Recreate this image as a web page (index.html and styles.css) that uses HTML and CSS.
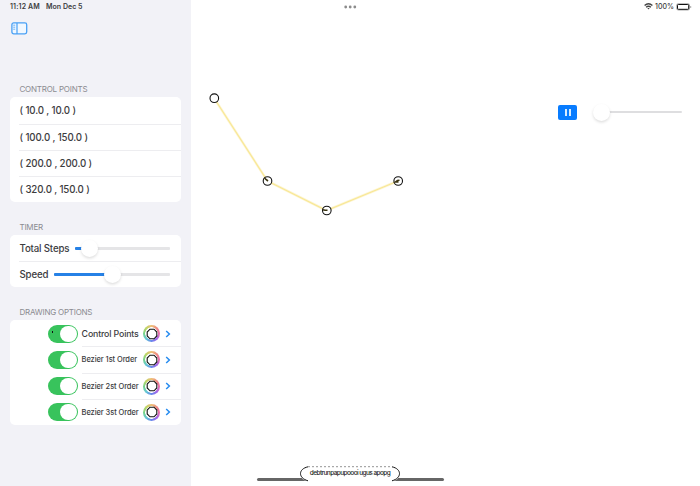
FILE: index.html
```html
<!DOCTYPE html>
<html lang="en">
<head>
<meta charset="utf-8">
<title>Bezier</title>
<link rel="stylesheet" href="styles.css">
</head>
<body>
<aside class="sidebar">
  <div class="clock"><span class="time">11:12 AM</span><span class="date">Mon Dec 5</span></div>
  <svg class="toggle-icon" width="17" height="13" viewBox="0 0 17 13"><rect x=".9" y=".9" width="14.8" height="11" rx="1.8" fill="#f1f8ff" stroke="#49a0f5" stroke-width="1.3"/><path d="M6 1v11" stroke="#49a0f5" stroke-width="1.2"/><path d="M2.2 3.2h2M2.2 5.2h2M2.2 7.2h2" stroke="#6db3f7" stroke-width="1"/></svg>
  <section class="group points">
    <h2>CONTROL POINTS</h2>
    <ul class="card">
      <li>( 10.0 , 10.0 )</li>
      <li>( 100.0 , 150.0 )</li>
      <li>( 200.0 , 200.0 )</li>
      <li>( 320.0 , 150.0 )</li>
    </ul>
  </section>
  <section class="group timer">
    <h2>TIMER</h2>
    <ul class="card">
      <li><span class="label steps">Total Steps</span><div class="slider" style="--v:15%"><i></i><b></b></div></li>
      <li><span class="label speed">Speed</span><div class="slider" style="--v:50%"><i></i><b></b></div></li>
    </ul>
  </section>
  <section class="group options">
    <h2>DRAWING OPTIONS</h2>
    <ul class="card">
      <li><span class="switch dot"></span><span class="name large">Control Points</span><span class="wheel"><svg width="12" height="12" viewBox="0 0 12 12"><path d="M4 1.2h4L10.8 4v4L8 10.8H4L1.2 8V4z"/></svg></span><svg class="chev" width="6" height="8" viewBox="0 0 6 8"><path d="M1.2 1l3.2 3-3.2 3"/></svg></li>
      <li><span class="switch"></span><span class="name">Bezier 1st Order</span><span class="wheel"><svg width="12" height="12" viewBox="0 0 12 12"><path d="M4 1.2h4L10.8 4v4L8 10.8H4L1.2 8V4z"/></svg></span><svg class="chev" width="6" height="8" viewBox="0 0 6 8"><path d="M1.2 1l3.2 3-3.2 3"/></svg></li>
      <li><span class="switch"></span><span class="name">Bezier 2st Order</span><span class="wheel"><svg width="12" height="12" viewBox="0 0 12 12"><path d="M4 1.2h4L10.8 4v4L8 10.8H4L1.2 8V4z"/></svg></span><svg class="chev" width="6" height="8" viewBox="0 0 6 8"><path d="M1.2 1l3.2 3-3.2 3"/></svg></li>
      <li><span class="switch"></span><span class="name">Bezier 3st Order</span><span class="wheel"><svg width="12" height="12" viewBox="0 0 12 12"><path d="M4 1.2h4L10.8 4v4L8 10.8H4L1.2 8V4z"/></svg></span><svg class="chev" width="6" height="8" viewBox="0 0 6 8"><path d="M1.2 1l3.2 3-3.2 3"/></svg></li>
    </ul>
  </section>
</aside>
<main class="stage">
  <header class="status">
    <svg class="dots" width="13" height="4" viewBox="0 0 13 4"><circle cx="1.7" cy="2" r="1.4"/><circle cx="6.2" cy="2" r="1.4"/><circle cx="10.8" cy="2" r="1.4"/></svg>
    <div class="power">
      <svg width="9" height="7" viewBox="0 0 9 7" fill="none" stroke="#444" stroke-width="1.4"><path d="M.6 2.5Q4.5-.9 8.4 2.5M2.1 4.2Q4.5 2.2 6.9 4.2"/><path d="M3.3 5.1h2.4L4.5 6.4z" fill="#444" stroke="none"/></svg>
      <span>100%</span>
      <svg width="16" height="8" viewBox="0 0 16 8"><rect x=".3" y=".3" width="13.6" height="7.2" rx="2" fill="#aaa"/><rect x="1.5" y="1.5" width="11.2" height="4.8" rx="1" fill="#fff" stroke="#111"/><path d="M14.7 3v2" stroke="#aaa"/></svg>
    </div>
  </header>
  <svg class="canvas" width="509" height="486" viewBox="191 0 509 486">
    <path d="M214 98L267.5 181L326.5 210.5L398 181" fill="none" stroke="#fdf6d8" stroke-width="2.6"/>
    <path d="M214 98L267.5 181L326.5 210.5L398 181" fill="none" stroke="#f8e795" stroke-width="1.2"/>
    <g fill="#fff" stroke="#111" stroke-width="1.1"><circle cx="214.3" cy="98.2" r="4.3"/><circle cx="267.5" cy="181" r="4.3"/><circle cx="326.8" cy="210.5" r="4.3"/><circle cx="398.2" cy="181" r="4.3"/></g>
    <path d="M264.5 178l1.5 1.5 2 1.5M323 209.8l2 .5h2.5M399.5 180.2l-2 .3-2 1.5h3" fill="none" stroke="#3b3410" stroke-width="1.6"/>
  </svg>
  <div class="player">
    <button class="pause" aria-label="Pause"><i></i><i></i></button>
    <div class="slider pale" style="--v:9%"><i></i><b></b></div>
  </div>
  <div class="home"></div>
  <div class="pill">
    <svg class="outline" width="100" height="16" viewBox="0 0 100 16"><rect x=".5" y=".5" width="99" height="14.6" rx="7.3" fill="#fff"/><path d="M8 14.8C-2 12-2 3 8 .8M92 .8c10 2.2 10 11.2 0 14" fill="none" stroke="#111"/><path d="M8 .7h84" stroke="#777" stroke-width=".8" stroke-dasharray="2 2"/></svg>
    <span>debtrunpapupoooi ugus apopg</span>
  </div>
</main>
</body>
</html>
```
FILE: styles.css
```css
* { box-sizing: border-box; }
body {
  margin: 0;
  width: 700px;
  height: 486px;
  display: flex;
  overflow: hidden;
  background: #fff;
  color: #3c3c3e;
  font-family: Inter, "Liberation Sans", sans-serif;
}
.sidebar {
  width: 191px;
  padding: 0 10px;
  background: #f2f2f7;
}
.clock {
  display: flex;
  gap: 6px;
  height: 14px;
  line-height: 14px;
  font-size: 7px;
  font-weight: 600;
  white-space: nowrap;
}
.time { width: 30px; letter-spacing: .13px; }
.date { letter-spacing: .04px; }
.toggle-icon { display: block; margin: 8px 0 0 1px; }
.group h2 {
  margin: 0;
  padding-left: 9.5px;
  height: 15px;
  line-height: 14px;
  font-size: 8px;
  font-weight: 400;
  letter-spacing: -.22px;
  color: #8b8b90;
  white-space: nowrap;
}
.points { margin-top: 47.4px; }
.timer { margin-top: 18px; }
.options { margin-top: 18px; }
.card {
  margin: 0;
  padding: 0;
  list-style: none;
  background: #fff;
  border-radius: 5px;
}
.card li {
  position: relative;
  display: flex;
  align-items: center;
  height: 26.15px;
  padding: 1px 11px 0 9.5px;
  font-size: 9.7px;
  font-weight: 500;
  letter-spacing: -.12px;
  white-space: nowrap;
}
.timer .card li { letter-spacing: -.17px; }
.card li + li::before {
  content: "";
  position: absolute;
  top: 0;
  left: 9px;
  right: 0;
  height: 1px;
  background: #ededf0;
}
.steps { width: 55.5px; }
.speed { width: 34.5px; }
.slider {
  position: relative;
  flex: 1;
  height: 2.5px;
  border-radius: 1px;
  background: #e5e5e7;
}
.slider i {
  display: block;
  width: var(--v);
  height: 100%;
  border-radius: 1px;
  background: #2681e6;
}
.slider b {
  position: absolute;
  left: var(--v);
  top: -7.5px;
  width: 17px;
  height: 17px;
  margin-left: -8.5px;
  border-radius: 50%;
  background: #fff;
  box-shadow: 0 1.5px 3px #0002;
}
.options .card li { padding: 1px 10px 0 37.6px; }
.options .card li + li::before { left: 72px; }
.switch {
  position: relative;
  width: 30.5px;
  height: 18.5px;
  border-radius: 10px;
  background: #38c35c;
}
.switch::after {
  content: "";
  position: absolute;
  right: 1px;
  top: 1px;
  width: 16.5px;
  height: 16.5px;
  border-radius: 50%;
  background: #fff;
}
.dot::before {
  content: "";
  position: absolute;
  left: 4px;
  top: 6px;
  width: 1px;
  height: 2px;
  background: #111;
}
.name {
  width: 62px;
  margin-left: 3.7px;
  font-size: 7.5px;
  letter-spacing: -.08px;
}
.options .large { font-size: 8.8px; letter-spacing: -.15px; }
.wheel {
  display: flex;
  align-items: center;
  justify-content: center;
  width: 17px;
  height: 17px;
  border-radius: 50%;
  background:
    radial-gradient(circle, #fff 0 6px, transparent 6.5px),
    conic-gradient(#efbf78, #ed8b82, #e96bad, #a269e9, #6987ed, #65c8d5, #75d489, #bfd668, #efbf78);
}
.wheel svg { fill: #fff; stroke: #111; stroke-width: 1.1; }
.chev {
  margin-left: 5px;
  fill: none;
  stroke: #268bf0;
  stroke-width: 1.5;
}
.stage { position: relative; width: 509px; height: 486px; }
.status {
  display: flex;
  align-items: center;
  justify-content: space-between;
  height: 13px;
  padding: 0 8px 0 153px;
}
.dots { fill: #8c8c8c; }
.power {
  display: flex;
  align-items: center;
  gap: 2px;
  font-size: 7px;
  font-weight: 500;
}
.canvas { position: absolute; left: 0; top: 0; }
.player {
  position: relative;
  display: flex;
  align-items: center;
  gap: 17px;
  height: 16px;
  margin: 91px 18px 0 367px;
}
.pause {
  display: flex;
  justify-content: center;
  align-items: center;
  gap: 2px;
  width: 19px;
  height: 15px;
  padding: 0;
  border: 0;
  border-radius: 2px;
  background: #087cff;
}
.pause i { width: 2px; height: 7px; background: #d9ecff; }
.pale { height: 2px; background: #dedee0; }
.pale i { background: transparent; }
.home {
  position: absolute;
  left: 66px;
  top: 478px;
  width: 187px;
  height: 3px;
  border-radius: 2px;
  background: #666;
}
.pill {
  position: absolute;
  left: 109px;
  top: 466px;
  width: 100px;
  height: 16px;
  display: flex;
  align-items: center;
  justify-content: center;
}
.outline { position: absolute; left: 0; top: 0; }
.pill span {
  position: relative;
  top: -1.5px;
  font-size: 6.5px;
  line-height: 8px;
  letter-spacing: -.58px;
  font-weight: 500;
  color: #222;
  white-space: nowrap;
}
```
